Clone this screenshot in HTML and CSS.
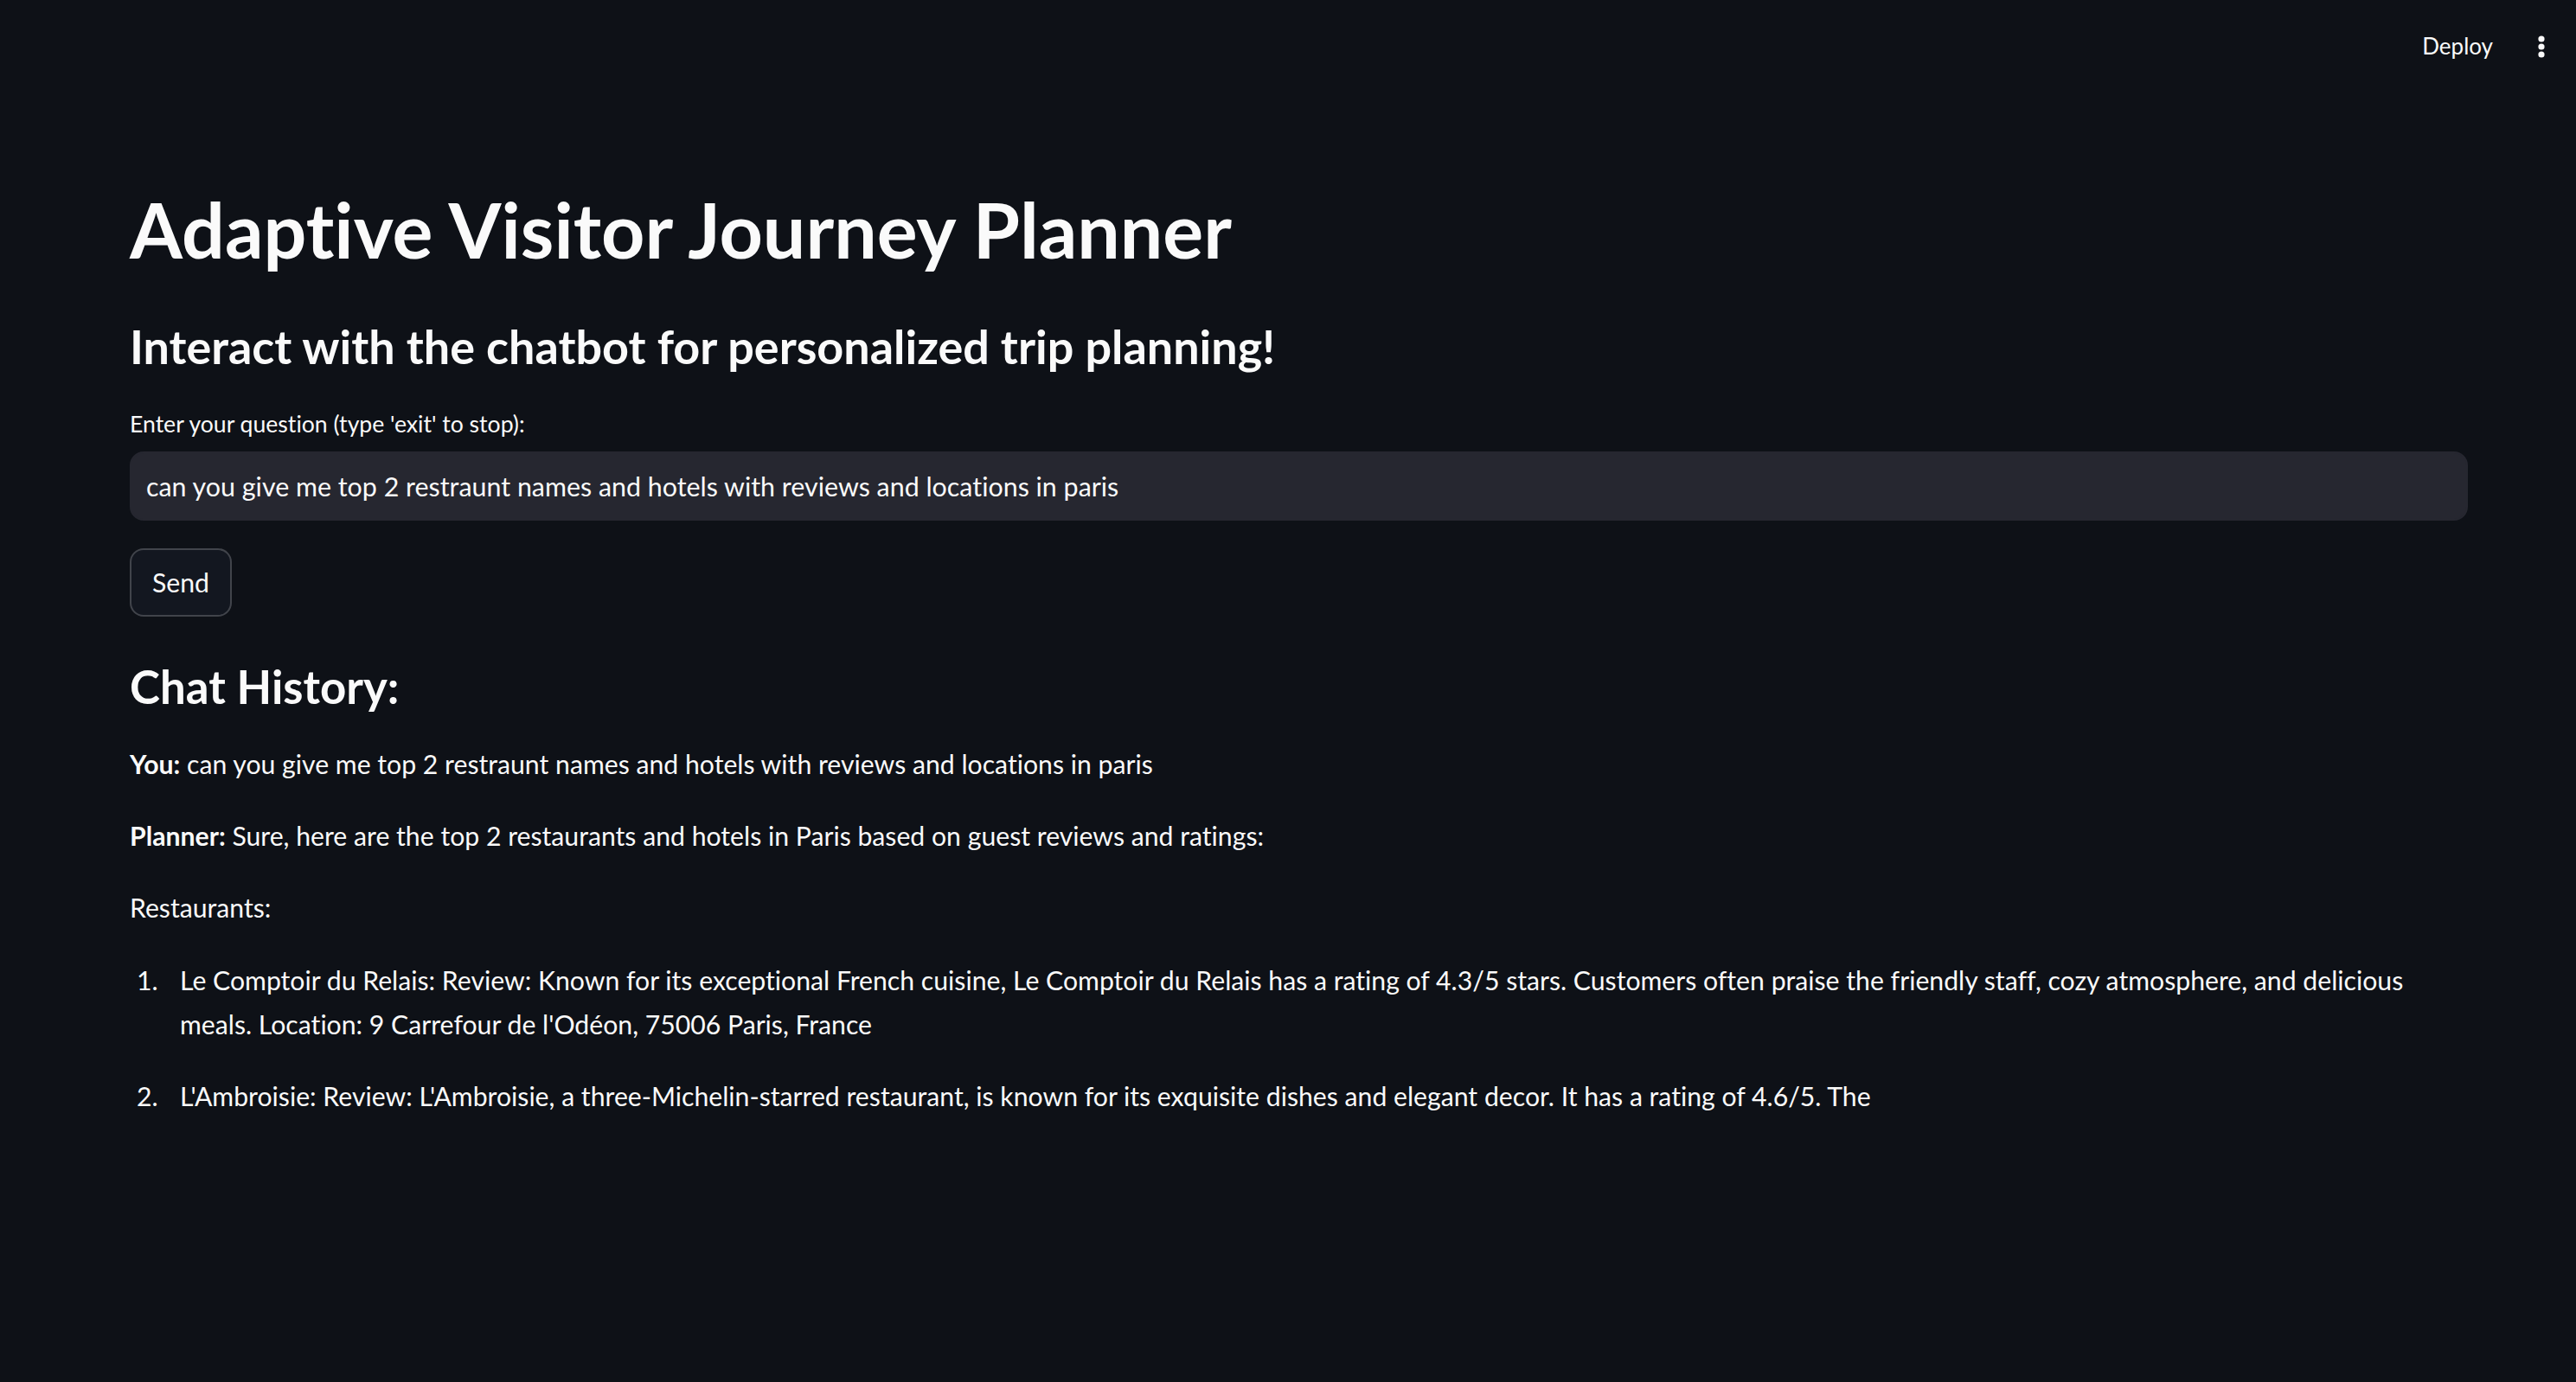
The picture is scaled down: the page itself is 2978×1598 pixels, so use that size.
FILE: index.html
```html
<!DOCTYPE html>
<html lang="en">
<head>
<meta charset="utf-8">
<title>Adaptive Visitor Journey Planner</title>
<link rel="stylesheet" href="styles.css">
</head>
<body>
<header class="topbar">
  <button class="deploy" type="button">Deploy</button>
  <button class="menu" type="button" aria-label="Main menu">
    <svg viewBox="0 0 8 26" width="8" height="26"><circle cx="4" cy="4" r="3.6"/><circle cx="4" cy="13" r="3.6"/><circle cx="4" cy="22" r="3.6"/></svg>
  </button>
</header>
<main class="main">
  <h1 class="title">Adaptive Visitor Journey Planner</h1>
  <h3 class="subheading">Interact with the chatbot for personalized trip planning!</h3>
  <label class="label" for="q">Enter your question (type 'exit' to stop):</label>
  <input class="text-input" id="q" type="text" value="can you give me top 2 restraunt names and hotels with reviews and locations in paris">
  <button class="send" type="button">Send</button>
  <h3 class="history-title">Chat History:</h3>
  <div class="markdown">
    <p><strong>You:</strong> can you give me top 2 restraunt names and hotels with reviews and locations in paris</p>
    <p><strong>Planner:</strong> Sure, here are the top 2 restaurants and hotels in Paris based on guest reviews and ratings:</p>
    <p>Restaurants:</p>
    <ol class="list">
      <li><p>Le Comptoir du Relais: Review: Known for its exceptional French cuisine, Le Comptoir du Relais has a rating of 4.3/5 stars. Customers often praise the friendly staff, cozy atmosphere, and delicious meals. Location: 9 Carrefour de l'Odéon, 75006 Paris, France</p></li>
      <li><p>L'Ambroisie: Review: L'Ambroisie, a three-Michelin-starred restaurant, is known for its exquisite dishes and elegant decor. It has a rating of 4.6/5. The</p></li>
    </ol>
  </div>
</main>
</body>
</html>
```
FILE: styles.css
```css
* { box-sizing: border-box; }
html, body {
  margin: 0;
  background: #0e1117;
  color: #fafafa;
  font-family: "Lato", "Open Sans", sans-serif;
  font-variant-ligatures: no-common-ligatures;
}
body { min-height: 1598px; }

.topbar {
  height: 108px;
  display: flex;
  align-items: center;
  justify-content: flex-end;
  padding-right: 36px;
}
.deploy {
  background: transparent;
  border: 0;
  color: #fafafa;
  font: 400 26px/1.2 "Lato", sans-serif;
  padding: 0;
  margin-right: 52px;
}
.menu {
  background: transparent;
  border: 0;
  padding: 0;
  display: flex;
  fill: #fafafa;
}

.main {
  padding: 105px 125px 200px 150px;
  display: flex;
  flex-direction: column;
  align-items: flex-start;
}

.title {
  margin: 0;
  font-size: 87.8px;
  font-weight: 700;
  line-height: 104px;
}
.subheading {
  margin: 51px 0 0;
  font-size: 53.9px;
  font-weight: 700;
  line-height: 64px;
}
.label {
  margin-top: 37px;
  font-size: 26.6px;
  line-height: 42px;
}
.text-input {
  margin-top: 11px;
  width: 100%;
  height: 80px;
  background: #262730;
  border: 2px solid #262730;
  border-radius: 16px;
  color: #fafafa;
  font: 400 30.4px "Lato", sans-serif;
  font-variant-ligatures: no-common-ligatures;
  padding: 0 17px;
  outline: none;
}
.send {
  margin-top: 32px;
  height: 79px;
  padding: 0 24px;
  background: rgb(19, 23, 32);
  border: 2px solid rgba(250, 250, 250, 0.2);
  border-radius: 16px;
  color: #fafafa;
  font: 400 30.2px/1.2 "Lato", sans-serif;
}
.history-title {
  margin: 49px 0 0;
  font-size: 52.8px;
  font-weight: 700;
  line-height: 64px;
}

.markdown {
  margin-top: 32px;
  width: 100%;
  font-size: 30.2px;
  line-height: 51.2px;
}
.markdown p { margin: 0 0 32px; }
.markdown strong { font-weight: 700; }

.list {
  list-style: none;
  margin: 0;
  padding: 0;
  counter-reset: item;
}
.list li {
  counter-increment: item;
  display: grid;
  grid-template-columns: 58px 1fr;
}
.list li::before {
  content: counter(item) ".";
  padding-left: 8px;
}
```
